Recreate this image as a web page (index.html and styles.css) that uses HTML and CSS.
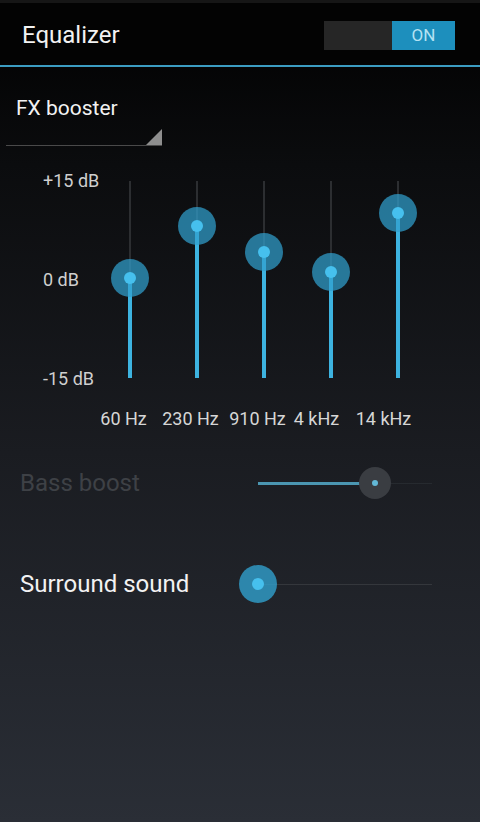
FILE: index.html
```html
<!DOCTYPE html>
<html lang="en">
<head>
    <meta charset="UTF-8">
    <meta name="viewport" content="width=device-width, initial-scale=1.0">
    <title>Equalizer</title>
    <link rel="stylesheet" href="styles.css">
</head>
<body>

    <!-- Action bar -->
    <div class="header">
        <div class="title">Equalizer</div>
        <div class="switch">
            <span class="switch-off"></span>
            <span class="switch-on">ON</span>
        </div>
    </div>

    <div class="content">
        <!-- Preset spinner -->
        <div class="spinner">
            <span class="spinner-text">FX booster</span>
        </div>

        <!-- Band sliders -->
        <div class="eq">
            <div class="db-labels">
                <span>+15 dB</span>
                <span>0 dB</span>
                <span>-15 dB</span>
            </div>
            <div class="bands">
                <div class="band"><div class="track"><div class="fill" style="height: 51%"><span class="thumb"></span></div></div></div>
                <div class="band"><div class="track"><div class="fill" style="height: 77%"><span class="thumb"></span></div></div></div>
                <div class="band"><div class="track"><div class="fill" style="height: 64%"><span class="thumb"></span></div></div></div>
                <div class="band"><div class="track"><div class="fill" style="height: 54%"><span class="thumb"></span></div></div></div>
                <div class="band"><div class="track"><div class="fill" style="height: 84%"><span class="thumb"></span></div></div></div>
            </div>
        </div>

        <div class="freqs">
            <span style="margin-left: -6px">60 Hz</span>
            <span>230 Hz</span>
            <span>910 Hz</span>
            <span style="margin-left: -8px">4 kHz</span>
            <span>14 kHz</span>
        </div>

        <!-- Effects -->
        <div class="row disabled">
            <div class="row-label">Bass boost</div>
            <div class="hslider">
                <div class="hfill" style="width: 67%"><span class="hthumb"></span></div>
            </div>
        </div>

        <div class="row">
            <div class="row-label">Surround sound</div>
            <div class="hslider">
                <div class="hfill" style="width: 0%"><span class="hthumb"></span></div>
            </div>
        </div>
    </div>

</body>
</html>
```

FILE: styles.css
```css
html, body {
    height: 100%;
}

body {
    margin: 0;
    font-family: Roboto, "Noto Sans", sans-serif;
    color: #f2f2f2;
    background: linear-gradient(to bottom, #000000 0%, #0b0c0e 20%, #1a1c21 55%, #2a2e36 100%);
}

.header {
    height: 67px;
    background-color: #030303;
    border-top: 3px solid #161616;
    border-bottom: 2px solid #3b9cc2;
    display: flex;
    align-items: center;
    justify-content: space-between;
    padding: 0 25px 0 22px;
    box-sizing: border-box;
}

.title {
    font-size: 24px;
    margin-top: 1px;
}

.switch {
    display: flex;
    height: 29px;
    margin-top: 2px;
}

.switch-off {
    width: 68px;
    background-color: #262626;
}

.switch-on {
    width: 63px;
    background-color: #1d8fbd;
    color: #b4e2f3;
    font-size: 17px;
    display: flex;
    align-items: center;
    justify-content: center;
}

.content {
    padding-top: 29px;
}

.spinner {
    position: relative;
    margin-left: 6px;
    width: 156px;
    height: 50px;
    border-bottom: 1px solid #4a4a4a;
    box-sizing: border-box;
}

.spinner-text {
    font-size: 21px;
    margin-left: 10px;
}

.spinner::after {
    content: "";
    position: absolute;
    right: 0;
    bottom: 0;
    width: 0;
    height: 0;
    border-left: 16px solid transparent;
    border-bottom: 16px solid #8e8e8e;
}

.eq {
    display: flex;
    margin-top: 35px;
    height: 197px;
}

.db-labels {
    width: 96px;
    padding-left: 43px;
    box-sizing: border-box;
    display: flex;
    flex-direction: column;
    justify-content: space-between;
    font-size: 18px;
    color: #cfcfcf;
    margin-top: -11px;
    margin-bottom: -11px;
    white-space: nowrap;
}

.bands {
    display: flex;
}

.band {
    width: 67px;
    display: flex;
    justify-content: center;
}

.track {
    position: relative;
    width: 2px;
    height: 100%;
    background-color: #2c2e31;
}

.fill {
    position: absolute;
    left: -1px;
    bottom: 0;
    width: 4px;
    background-color: #3db3e0;
}

.thumb {
    position: absolute;
    left: 2px;
    top: 0;
    width: 38px;
    height: 38px;
    margin: -19px 0 0 -19px;
    border-radius: 50%;
    background-color: rgba(49, 160, 205, 0.72);
}

.thumb::after {
    content: "";
    position: absolute;
    left: 13px;
    top: 13px;
    width: 12px;
    height: 12px;
    border-radius: 50%;
    background-color: #46c0ee;
}

.freqs {
    display: flex;
    margin-left: 96px;
    margin-top: 30px;
    font-size: 18px;
    color: #d6d6d6;
}

.freqs span {
    width: 67px;
    text-align: center;
    white-space: nowrap;
}

.row {
    display: flex;
    align-items: center;
    height: 40px;
    padding-left: 20px;
}

.row-label {
    font-size: 24px;
    width: 238px;
}

.freqs + .row {
    margin-top: 34px;
}

.row + .row {
    margin-top: 61px;
}

.hslider {
    position: relative;
    width: 174px;
    height: 1px;
    background-color: #34373c;
}

.hfill {
    position: absolute;
    left: 0;
    top: -1px;
    height: 3px;
    background-color: #3db3e0;
}

.hthumb {
    position: absolute;
    right: -19px;
    top: 50%;
    width: 38px;
    height: 38px;
    margin-top: -19px;
    border-radius: 50%;
    background-color: rgba(49, 160, 205, 0.8);
}

.hthumb::after {
    content: "";
    position: absolute;
    left: 13px;
    top: 13px;
    width: 12px;
    height: 12px;
    border-radius: 50%;
    background-color: #46c0ee;
}

.disabled .row-label {
    color: #3e4146;
}

.disabled .hslider {
    background-color: #262a2f;
}

.disabled .hfill {
    background-color: #4b96b1;
}

.disabled .hthumb {
    width: 32px;
    height: 32px;
    right: -16px;
    margin-top: -16px;
    background-color: #3a3d42;
}

.disabled .hthumb::after {
    left: 13px;
    top: 13px;
    width: 6px;
    height: 6px;
    background-color: #62b8d6;
}
```
